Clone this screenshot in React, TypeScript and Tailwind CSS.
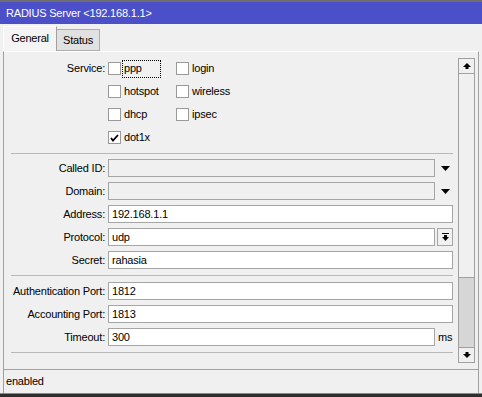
const font = "font-['Liberation_Sans',Arial,sans-serif] text-[11px] tracking-[-0.2px] text-black"

function Checkbox({ checked }: { checked?: boolean }) {
  return (
    <div className="w-[13px] h-[13px] border border-[#9a9a9a] bg-white flex items-center justify-center shrink-0">
      {checked && (
        <svg width="9" height="8" viewBox="0 0 9 8">
          <path d="M1 4 L3 6.5 L8 1" fill="none" stroke="#000" strokeWidth="1.8" />
        </svg>
      )}
    </div>
  )
}

function CheckItem({ label, checked, focused }: { label: string; checked?: boolean; focused?: boolean }) {
  return (
    <div className="flex items-center">
      <Checkbox checked={checked} />
      <span
        className={
          "ml-[1px] h-[18px] pl-[1px] flex items-center border border-dotted " +
          (focused ? "border-black w-[39px]" : "border-transparent")
        }
      >
        {label}
      </span>
    </div>
  )
}

function DownTriangle() {
  return (
    <svg width="9" height="5" viewBox="0 0 9 5" className="ml-[6px]">
      <polygon points="0,0 9,0 4.5,5" fill="#000" />
    </svg>
  )
}

function Field({ label, value, wide = true, disabled, suffix }: { label: string; value?: string; wide?: boolean; disabled?: boolean; suffix?: React.ReactNode }) {
  return (
    <div className="flex items-center h-[18px] mt-[5px] first:mt-0">
      <div className="w-[101px] text-right whitespace-nowrap">{label}</div>
      <div
        className={
          "ml-[3px] h-[18px] border border-[#a5a5a5] flex items-center pl-[3px] " +
          (wide ? "w-[345px] " : "w-[327px] ") +
          (disabled ? "bg-[#f0f0f0]" : "bg-white")
        }
      >
        {value}
      </div>
      {suffix}
    </div>
  )
}

function Separator() {
  return <div className="ml-[7px] w-[442px] h-px bg-[#b9b9b9]" />
}

function ScrollArrow({ up }: { up?: boolean }) {
  return (
    <div className="h-[16px] border border-[#a0a0a0] bg-[#f0f0f0] flex items-center justify-center">
      <svg width="8" height="6" viewBox="0 0 8 6" className={up ? "" : "rotate-180"}>
        <polygon points="4,0 8,4 5.5,4 5.5,6 2.5,6 2.5,4 0,4" fill="#000" />
      </svg>
    </div>
  )
}

export default function App() {
  const services = [
    ["ppp", "login"],
    ["hotspot", "wireless"],
    ["dhcp", "ipsec"],
    ["dot1x", null],
  ]

  return (
    <div className={"w-[482px] h-[397px] bg-[#f0f0f0] flex flex-col overflow-hidden " + font}>
      {/* title */}
      <div className="h-[24px] border-t-2 border-[#6e6e6e] bg-[#4b50c9] text-white flex items-center pl-[6px] text-[11px]">
        RADIUS Server &lt;192.168.1.1&gt;
      </div>

      {/* tabs */}
      <div className="h-[27px] flex items-end pl-[3px]">
        <div className="h-[25px] w-[54px] bg-[#f4f4f4] border-l border-t border-[#ffffff] border-r-[#a0a0a0] border-r flex items-center justify-center pb-[1px]">
          General
        </div>
        <div className="h-[22px] w-[43px] bg-[#e1e1e1] border-t border-r border-b border-[#adadad] flex items-center justify-center">
          Status
        </div>
      </div>

      {/* panel */}
      <div className="h-[318px] mx-[3px] border-t border-t-white border-l border-r border-[#a0a0a0] flex">
        <div className="w-[450px] flex flex-col">
          <div className="pt-[5px]">
            {services.map((row, i) => (
              <div key={i} className="h-[23px] flex items-center">
                <div className="w-[101px] text-right">{i === 0 ? "Service:" : ""}</div>
                <div className="ml-[3px] w-[68px]">
                  <CheckItem label={row[0] as string} checked={row[0] === "dot1x"} focused={row[0] === "ppp"} />
                </div>
                {row[1] && <CheckItem label={row[1]} />}
              </div>
            ))}
          </div>

          <div className="mt-[4px]">
            <Separator />
          </div>

          <div className="mt-[5px] flex flex-col">
            <Field label="Called ID:" wide={false} disabled suffix={<DownTriangle />} />
            <Field label="Domain:" wide={false} disabled suffix={<DownTriangle />} />
            <Field label="Address:" value="192.168.1.1" />
            <Field
              label="Protocol:"
              value="udp"
              wide={false}
              suffix={
                <div className="ml-[2px] w-[16px] h-[18px] border border-[#a5a5a5] bg-[#f0f0f0] flex items-center justify-center">
                  <svg width="7" height="8" viewBox="0 0 7 8">
                    <rect x="0" y="0" width="7" height="1" fill="#000" />
                    <polygon points="2,2 5,2 5,4 7,4 3.5,8 0,4 2,4" fill="#000" />
                  </svg>
                </div>
              }
            />
            <Field label="Secret:" value="rahasia" />
          </div>

          <div className="mt-[6px]">
            <Separator />
          </div>

          <div className="mt-[6px] flex flex-col">
            <Field label="Authentication Port:" value="1812" />
            <Field label="Accounting Port:" value="1813" />
            <Field label="Timeout:" value="300" wide={false} suffix={<span className="ml-[3px]">ms</span>} />
          </div>

          <div className="mt-[6px]">
            <Separator />
          </div>
        </div>

        {/* scrollbar */}
        <div className="ml-[4px] mt-[6px] w-[17px] h-[305px] flex flex-col">
          <ScrollArrow up />
          <div className="h-[204px] border-l border-r border-b border-[#a0a0a0] bg-[#f0f0f0]" />
          <div className="h-[69px] border-l border-r border-[#a0a0a0] bg-[#d6d6d6]" />
          <ScrollArrow />
        </div>
      </div>

      {/* status bar */}
      <div className="h-[24px] mx-[3px] border-t border-l border-r border-[#a0a0a0] flex items-center pl-[2px]">
        enabled
      </div>

      <div className="h-[4px] bg-[#2e2e2e] border-t border-[#8a8a8a]" />
    </div>
  )
}
